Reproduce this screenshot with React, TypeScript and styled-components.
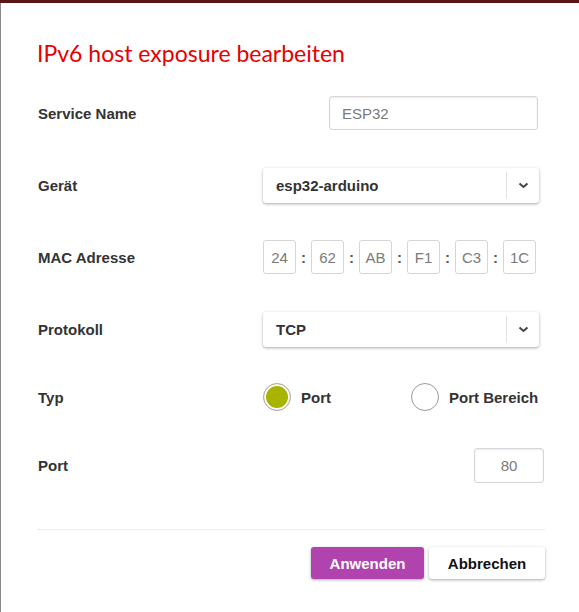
import { useState } from "react";
import styled, { createGlobalStyle } from "styled-components";

const GlobalStyle = createGlobalStyle`
  html, body {
    margin: 0;
    padding: 0;
    background: #ffffff;
  }
  body {
    font-family: "Liberation Sans", Arial, sans-serif;
    color: #333333;
  }
`;

const Backdrop = styled.div`
  width: 579px;
  height: 612px;
  border-top: 3px solid #5a1414;
  box-sizing: border-box;
  overflow: hidden;
`;

const Modal = styled.div`
  height: 100%;
  background: #ffffff;
  border-left: 1px solid #8a8a8a;
  padding: 35px 0 0 36px;
  box-sizing: border-box;
`;

const Title = styled.h2`
  margin: 0 0 9px;
  font-family: Lato, "Open Sans", sans-serif;
  font-weight: 400;
  font-size: 23px;
  line-height: 30px;
  color: #e60000;
`;

const Form = styled.div`
  width: 508px;
  display: flex;
  flex-direction: column;
`;

const Row = styled.div<{ $h?: number }>`
  display: flex;
  align-items: center;
  height: ${(p) => p.$h ?? 72}px;
`;

const Label = styled.div`
  width: 226px;
  flex: none;
  font-weight: 700;
  font-size: 15px;
  color: #333333;
  padding-left: 1px;
  box-sizing: border-box;
`;

const Control = styled.div`
  flex: 1;
  display: flex;
  align-items: center;
`;

const TextInput = styled.input<{ $w: number; $center?: boolean }>`
  width: ${(p) => p.$w}px;
  height: 34px;
  box-sizing: border-box;
  border: 1px solid #d6d6d6;
  border-radius: 3px;
  box-shadow: inset 0 1px 2px rgba(0, 0, 0, 0.08);
  padding: 0 12px;
  font-family: "Liberation Sans", Arial, sans-serif;
  font-size: 15px;
  color: #7a7a7a;
  text-align: ${(p) => (p.$center ? "center" : "left")};
  outline: none;
`;

const Select = styled.div`
  width: 276px;
  height: 35px;
  box-sizing: border-box;
  display: flex;
  align-items: stretch;
  border-radius: 3px;
  background: #ffffff;
  box-shadow: 0 1px 3px rgba(0, 0, 0, 0.35);
`;

const SelectValue = styled.div`
  flex: 1;
  display: flex;
  align-items: center;
  padding-left: 13px;
  font-weight: 700;
  font-size: 15px;
  color: #333333;
`;

const SelectArrow = styled.div`
  width: 32px;
  margin: 4px 0;
  border-left: 1px solid #e2e2e2;
  display: flex;
  align-items: center;
  justify-content: center;
`;

const MacRow = styled.div`
  display: flex;
  align-items: center;
`;

const MacBox = styled.div`
  width: 33px;
  height: 34px;
  box-sizing: border-box;
  border: 1px solid #d6d6d6;
  border-radius: 3px;
  display: flex;
  align-items: center;
  justify-content: center;
  font-size: 15px;
  color: #7a7a7a;
`;

const Colon = styled.span`
  width: 15px;
  text-align: center;
  font-size: 15px;
  font-weight: 700;
  color: #555555;
`;

const RadioOption = styled.label<{ $w: number }>`
  width: ${(p) => p.$w}px;
  display: flex;
  align-items: center;
  gap: 10px;
  font-weight: 700;
  font-size: 15px;
  color: #333333;
  cursor: pointer;
`;

const RadioDot = styled.span<{ $on: boolean }>`
  width: 28px;
  height: 28px;
  box-sizing: border-box;
  border-radius: 50%;
  border: 1px solid ${(p) => (p.$on ? "#b0b0b0" : "#9a9a9a")};
  background: ${(p) => (p.$on ? "#a8b400" : "#ffffff")};
  box-shadow: ${(p) => (p.$on ? "inset 0 0 0 2px #ffffff" : "none")};
`;

const Divider = styled.hr`
  margin: 28px 0 17px;
  border: none;
  border-top: 1px solid #ececec;
  width: 508px;
`;

const Actions = styled.div`
  width: 508px;
  display: flex;
  justify-content: flex-end;
  gap: 5px;
`;

const Button = styled.button<{ $primary?: boolean; $w: number }>`
  width: ${(p) => p.$w}px;
  height: 32px;
  border: none;
  border-radius: 3px;
  font-family: "Liberation Sans", Arial, sans-serif;
  font-weight: 700;
  font-size: 15px;
  color: ${(p) => (p.$primary ? "#ffffff" : "#111111")};
  background: ${(p) => (p.$primary ? "#b043ad" : "#ffffff")};
  box-shadow: 0 1px 3px rgba(0, 0, 0, 0.35);
  cursor: pointer;
`;

function Chevron() {
  return (
    <svg width="11" height="7" viewBox="0 0 11 7">
      <path d="M1.5 1.5 L5.5 5 L9.5 1.5" fill="none" stroke="#444" strokeWidth="2" />
    </svg>
  );
}

const mac = ["24", "62", "AB", "F1", "C3", "1C"];

export default function App() {
  const [typ, setTyp] = useState<"port" | "range">("port");

  return (
    <>
      <GlobalStyle />
      <Backdrop>
        <Modal>
          <Title>IPv6 host exposure bearbeiten</Title>
          <Form>
            <Row>
              <Label>Service Name</Label>
              <Control>
                <TextInput $w={209} style={{ marginLeft: 66 }} defaultValue="ESP32" />
              </Control>
            </Row>
            <Row>
              <Label>Gerät</Label>
              <Control>
                <Select>
                  <SelectValue>esp32-arduino</SelectValue>
                  <SelectArrow>
                    <Chevron />
                  </SelectArrow>
                </Select>
              </Control>
            </Row>
            <Row>
              <Label>MAC Adresse</Label>
              <Control>
                <MacRow>
                  {mac.map((m, i) => (
                    <MacRow key={i}>
                      {i > 0 && <Colon>:</Colon>}
                      <MacBox>{m}</MacBox>
                    </MacRow>
                  ))}
                </MacRow>
              </Control>
            </Row>
            <Row>
              <Label>Protokoll</Label>
              <Control>
                <Select>
                  <SelectValue>TCP</SelectValue>
                  <SelectArrow>
                    <Chevron />
                  </SelectArrow>
                </Select>
              </Control>
            </Row>
            <Row $h={64}>
              <Label>Typ</Label>
              <Control>
                <RadioOption $w={148} onClick={() => setTyp("port")}>
                  <RadioDot $on={typ === "port"} />
                  Port
                </RadioOption>
                <RadioOption $w={130} onClick={() => setTyp("range")}>
                  <RadioDot $on={typ === "range"} />
                  Port Bereich
                </RadioOption>
              </Control>
            </Row>
            <Row>
              <Label>Port</Label>
              <Control>
                <TextInput $w={70} $center style={{ marginLeft: "auto", marginRight: 1, height: 35 }} defaultValue="80" />
              </Control>
            </Row>
          </Form>
          <Divider />
          <Actions>
            <Button $primary $w={113}>Anwenden</Button>
            <Button $w={116}>Abbrechen</Button>
          </Actions>
        </Modal>
      </Backdrop>
    </>
  );
}
